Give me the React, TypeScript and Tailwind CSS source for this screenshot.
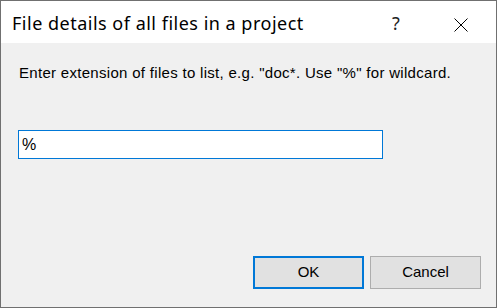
export default function App() {
  return (
    <div className="w-[497px] h-[308px] border border-[#707070] flex flex-col bg-white">
      <div className="h-[42px] shrink-0 flex items-center bg-white">
        <span
          className="pl-[11px] text-[18px] leading-[24px] tracking-[0.5px] text-black flex-1 pt-[2px]"
          style={{ fontFamily: '"Noto Sans", "Open Sans", sans-serif' }}
        >
          File details of all files in a project
        </span>
        <span
          className="w-[14px] mr-[51px] text-center text-[18px] text-[#222] pt-[2px]"
          style={{ fontFamily: '"Noto Sans", sans-serif' }}
        >
          ?
        </span>
        <svg width="14" height="14" viewBox="0 0 14 14" className="mr-[28px] mt-[5px]">
          <path d="M0.5 0.5 L13.5 13.5 M13.5 0.5 L0.5 13.5" stroke="#000" strokeWidth="1" />
        </svg>
      </div>
      <div
        className="flex-1 bg-[#f0f0f0] flex flex-col pt-[21px] pl-[17px] pr-[15px] pb-[18px] text-[15px] text-black"
        style={{ fontFamily: '"Liberation Sans", Arial, sans-serif' }}
      >
        <p className="leading-[17px] pl-[1px] tracking-[0.3px]">
          Enter extension of files to list, e.g. "doc*. Use "%" for wildcard.
        </p>
        <div className="mt-[49px] w-[365px] h-[29px] border border-[#0078d7] bg-white flex items-center pl-[3px] text-[16px]">
          %
        </div>
        <div className="mt-auto flex justify-end gap-[6px]">
          <button className="w-[111px] h-[33px] border-2 border-[#0078d7] bg-[#e1e1e1] text-[15px]">
            OK
          </button>
          <button className="w-[111px] h-[33px] border border-[#adadad] bg-[#e1e1e1] text-[15px]">
            Cancel
          </button>
        </div>
      </div>
    </div>
  )
}
